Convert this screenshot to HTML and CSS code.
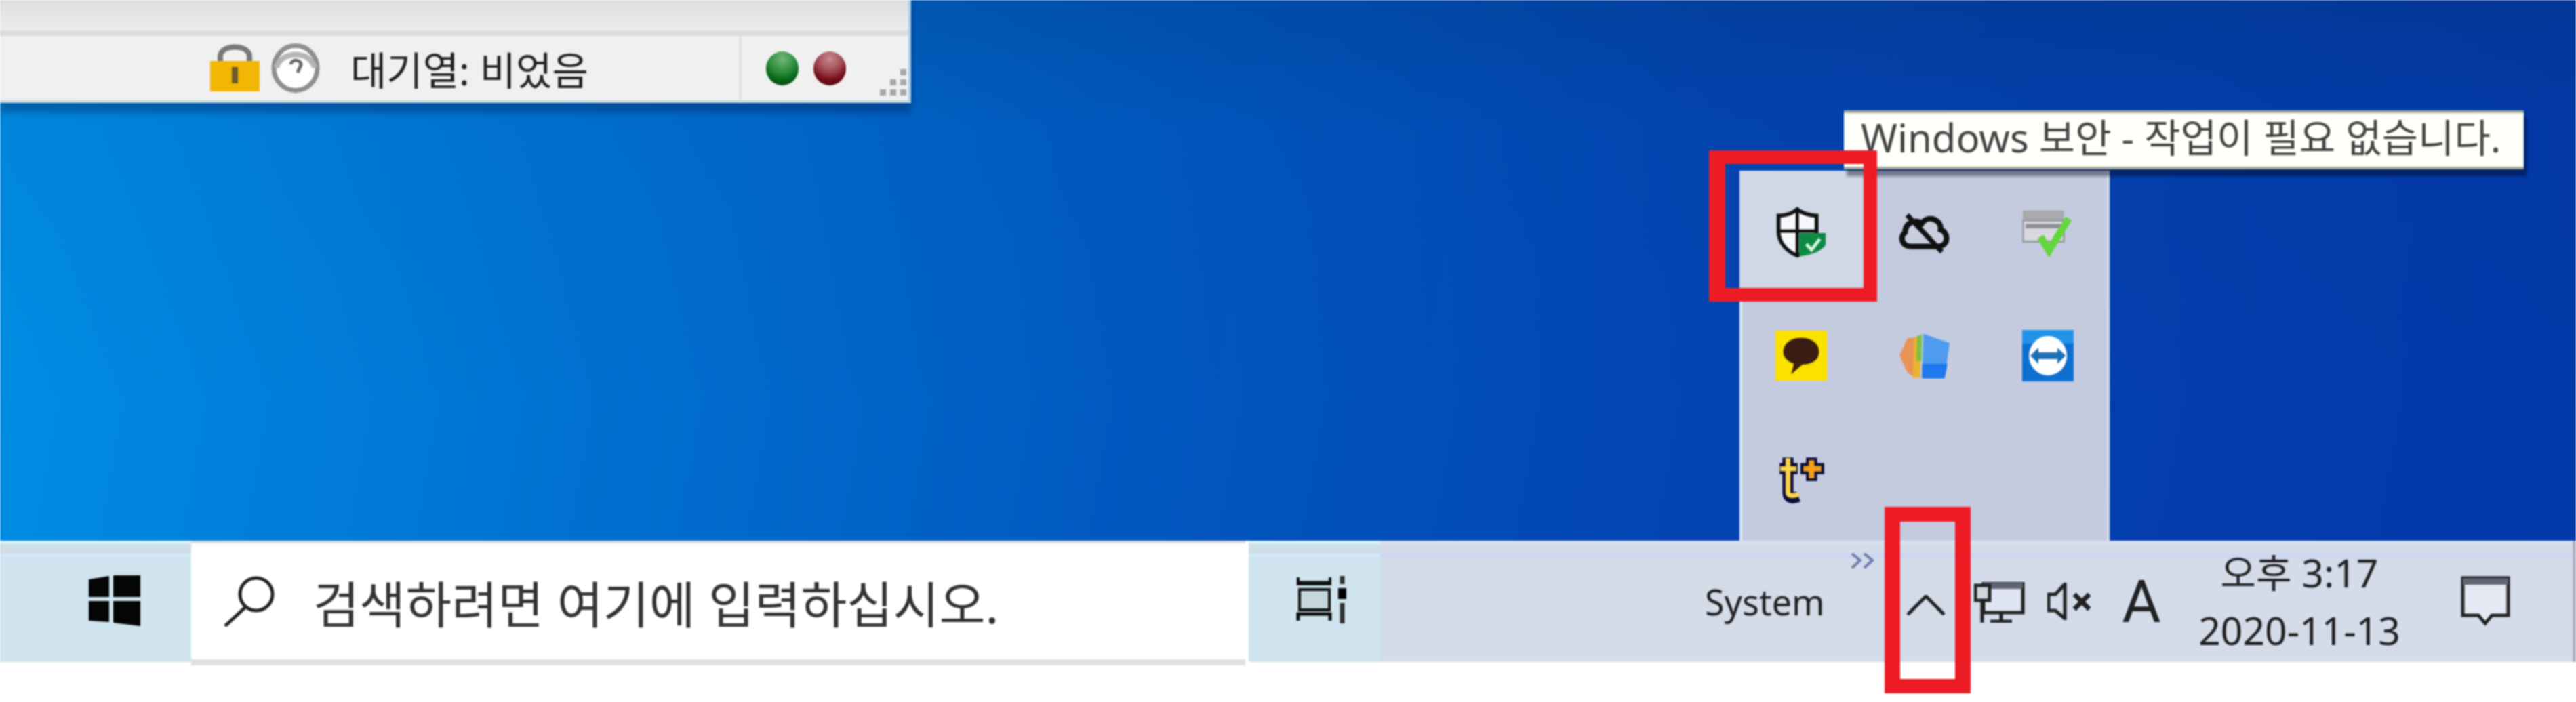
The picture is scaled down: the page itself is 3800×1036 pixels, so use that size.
FILE: index.html
```html
<!DOCTYPE html>
<html lang="ko">
<head>
    <meta charset="utf-8">
    <title>Windows 보안</title>
    <link rel="stylesheet" href="styles.css">
</head>
<body>
    <div class="desktop">
        <div class="window">
            <div class="window-top"></div>
            <div class="status">
                <svg class="lock" viewBox="0 0 73 75">
                    <path d="M15 34V20C15 2 58 2 58 20V34" fill="none" stroke="#77797a" stroke-width="8"/>
                    <rect y="27" width="73" height="45" fill="#f2b705"/>
                    <rect x="32" y="36" width="9" height="24" fill="#6b5a2a"/>
                </svg>
                <svg class="gauge" viewBox="0 0 72 75">
                    <ellipse cx="36" cy="37.500" rx="32" ry="33" fill="#fff" stroke="#8e8e8e" stroke-width="7"/>
                    <path d="M8 37C12 14 56 8 64 37" fill="none" stroke="#b5b5b5" stroke-width="8"/>
                    <path d="M29 32C30 24 44 24 44 33L39 44" fill="none" stroke="#666" stroke-width="5"/>
                </svg>
                <span class="queue">대기열: 비었음</span>
                <div class="status-sep"></div>
                <div class="ball green"></div>
                <div class="ball red"></div>
                <svg class="grip" viewBox="0 0 45 45">
                    <g fill="#a8a8a8">
                        <rect x="33" y="3" width="9" height="9"/>
                        <rect x="18" y="18" width="9" height="9"/>
                        <rect x="33" y="18" width="9" height="9"/>
                        <rect x="3" y="33" width="9" height="9"/>
                        <rect x="18" y="33" width="9" height="9"/>
                        <rect x="33" y="33" width="9" height="9"/>
                    </g>
                </svg>
            </div>
        </div>

        <div class="tray-popup">
            <div class="tray-cell hover">
                <svg class="icon" viewBox="0 0 80 78">
                    <path d="M34 3C26 10 14 13 5 13V38C5 56 20 70 34 75C48 70 64 56 64 38V13C55 13 42 10 34 3Z" fill="#f7f8fb" stroke="#111" stroke-width="6"/>
                    <path d="M34 3V75M5 37H64" stroke="#111" stroke-width="5"/>
                    <path d="M37 40H78V58C72 68 58 74 37 76Z" fill="#0f8a45"/>
                    <path d="M48 57L56 66L69 49" fill="none" stroke="#d6f5df" stroke-width="5"/>
                </svg>
            </div>
            <div class="tray-cell">
                <svg class="icon" viewBox="0 0 74 60">
                    <path d="M18 50C4 50 1 36 9 30C9 16 24 10 33 17C42 4 62 12 60 26C72 30 72 50 56 50Z" fill="#c9cedf" stroke="#111" stroke-width="8"/>
                    <path d="M12 5L62 58" stroke="#111" stroke-width="7"/>
                </svg>
            </div>
            <div class="tray-cell">
                <svg class="icon" viewBox="0 0 73 64">
                    <rect x="1" y="1" width="58" height="14" fill="#a8a9ad"/>
                    <rect x="1" y="15" width="58" height="30" fill="#d9dadf" stroke="#9b9ca2" stroke-width="3"/>
                    <rect x="5" y="20" width="50" height="6" fill="#8b8c92"/>
                    <path d="M26 38L38 58L66 12" fill="none" stroke="#62d63c" stroke-width="10"/>
                </svg>
            </div>
            <div class="tray-cell">
                <svg class="icon" viewBox="0 0 78 76">
                    <rect width="78" height="76" fill="#fae100"/>
                    <path d="M39 11C56 11 66 20 66 32C66 44 56 51 41 51L24 66L28 50C17 46 12 40 12 32C12 20 22 11 39 11Z" fill="#3a1d12"/>
                </svg>
            </div>
            <div class="tray-cell">
                <svg class="icon" viewBox="0 0 73 65">
                    <path d="M12 8L26 6L22 63L12 56L1 32Z" fill="#f08a3e" opacity=".85"/>
                    <path d="M22 7L32 3L30 64H20Z" fill="#e8b42e"/>
                    <path d="M26 5L33 2L32 40H25Z" fill="#7cc043"/>
                    <path d="M35 1L50 7L72 14L65 64H33Z" fill="#4e9bf0"/>
                    <path d="M33 44H69L65 65H33Z" fill="#1f78ec"/>
                </svg>
            </div>
            <div class="tray-cell">
                <svg class="icon" viewBox="0 0 76 76">
                    <rect width="76" height="76" fill="#0e6fd0"/>
                    <rect width="76" height="20" fill="#2293e8"/>
                    <ellipse cx="38" cy="38" rx="28" ry="29" fill="#fff"/>
                    <rect x="22" y="33" width="32" height="10" fill="#1c6fb4"/>
                    <path d="M12 38L24 26V50ZM64 38L52 26V50Z" fill="#1c6fb4"/>
                </svg>
            </div>
            <div class="tray-cell">
                <svg class="icon" viewBox="0 0 74 70">
                    <path d="M18 4V54C18 62 24 64 33 60M6 20H32" fill="none" stroke="#0c0c3a" stroke-width="16"/>
                    <path d="M18 5V54C18 59 24 60 33 57M7 20H30" fill="none" stroke="#fbd647" stroke-width="7"/>
                    <path d="M52 4V38M36 20H70" fill="none" stroke="#0c0c3a" stroke-width="16"/>
                    <path d="M52 8V34M40 20H66" fill="none" stroke="#f59e1a" stroke-width="8"/>
                </svg>
            </div>
        </div>

        <div class="tooltip">Windows 보안 - 작업이 필요 없습니다.</div>
    </div>

    <div class="taskbar">
        <div class="start">
            <svg class="win-logo" viewBox="0 0 76 75">
                <path d="M0 6L30 1V32H0ZM36 0L76 0V32H36ZM0 38H30V69L0 67ZM36 38H76V75L36 70Z" fill="#050505"/>
            </svg>
        </div>
        <div class="search">
            <svg class="search-icon" viewBox="0 0 75 75">
                <ellipse cx="48" cy="27" rx="24" ry="24" fill="none" stroke="#222" stroke-width="5"/>
                <path d="M32 46L2 74" stroke="#222" stroke-width="5"/>
            </svg>
            <span class="search-text">검색하려면 여기에 입력하십시오.</span>
        </div>
        <div class="task-view">
            <svg class="task-icon" viewBox="0 0 75 70">
                <path d="M3 10H50M3 66V56H50V66" fill="none" stroke="#111" stroke-width="5"/>
                <path d="M3 2V12H50V2" fill="none" stroke="#111" stroke-width="4"/>
                <rect x="5" y="20" width="44" height="30" fill="#c6d6dd" stroke="#111" stroke-width="4"/>
                <path d="M68 0V12M68 40V70" stroke="#333" stroke-width="7"/>
                <rect x="62" y="18" width="12" height="16" fill="#000"/>
            </svg>
        </div>
        <div class="tray">
            <span class="tray-label">System</span>
            <svg class="tray-more" viewBox="0 0 37 25">
                <path d="M2 2L14 12L2 23M20 2L32 12L20 23" fill="none" stroke="#6f7da6" stroke-width="4"/>
            </svg>
            <svg class="chevron" viewBox="0 0 58 30">
                <path d="M2 29L29 2L56 29" fill="none" stroke="#222" stroke-width="5"/>
            </svg>
            <svg class="network" viewBox="0 0 75 60">
                <rect x="14" y="1" width="58" height="44" fill="#dfe4f2" stroke="#222" stroke-width="5"/>
                <rect x="14" y="1" width="58" height="9" fill="#5f6372"/>
                <rect x="2" y="5" width="21" height="22" fill="#d0d4de" stroke="#222" stroke-width="5"/>
                <path d="M12 26V60M40 45V58M24 58H56" stroke="#222" stroke-width="5" fill="none"/>
            </svg>
            <svg class="speaker" viewBox="0 0 66 55">
                <path d="M26 2V53L12 41H2V17H12Z" fill="none" stroke="#222" stroke-width="5"/>
                <path d="M40 17L62 39M62 17L40 39" stroke="#222" stroke-width="7"/>
            </svg>
            <span class="ime">A</span>
            <div class="clock">
                <span>오후 3:17</span>
                <span>2020-11-13</span>
            </div>
            <svg class="notify" viewBox="0 0 73 75">
                <path d="M3 3H70V58H46L36 70L26 58H3Z" fill="#e6e9f4" stroke="#222" stroke-width="5"/>
                <rect x="3" y="3" width="67" height="10" fill="#5f6372"/>
            </svg>
        </div>
    </div>

    <div class="mark mark-shield"></div>
    <div class="mark mark-arrow"></div>
</body>
</html>
```

FILE: styles.css
```css
html, body {
    margin: 0;
    height: 100%;
    background: #fff;
    overflow: hidden;
}

body {
    position: relative;
    font-family: "Noto Sans", "Noto Sans CJK KR", sans-serif;
    color: #222;
    filter: blur(1.2px);
}

.desktop {
    position: relative;
    height: 798px;
    background:
        linear-gradient(180deg, rgba(0, 40, 90, .16) 0, rgba(0, 40, 90, 0) 190px),
        linear-gradient(180deg, rgba(0, 50, 130, .12) 0, rgba(0, 50, 130, 0) 600px),
        linear-gradient(100deg, #0090e6 0%, #0079d6 18%, #005cc2 42%, #0345b2 65%, #0338a8 100%);
}

/* app window in the top corner */
.window {
    position: absolute;
    left: 0;
    top: 0;
    width: 1340px;
    height: 148px;
    border-right: 4px solid #a9cbe4;
    border-bottom: 4px solid #c2d9ea;
    box-shadow: 0 14px 8px rgba(0, 20, 60, .3);
    display: flex;
    flex-direction: column;
}

.window-top {
    height: 45px;
    background: linear-gradient(#dedede, #ececec);
    border-bottom: 8px solid #dcdcdc;
}

.status {
    flex: 1;
    background: #f0f0f0;
    display: flex;
    align-items: center;
    padding-left: 310px;
}

.lock {
    width: 73px;
    height: 75px;
}

.gauge {
    width: 72px;
    height: 75px;
    margin-left: 17px;
}

.queue {
    font-size: 58px;
    margin-left: 45px;
    width: 573px;
    flex: none;
    white-space: nowrap;
}

.status-sep {
    width: 4px;
    align-self: stretch;
    background: #e2e2e2;
}

.ball {
    width: 48px;
    height: 50px;
    border-radius: 50%;
    flex: none;
}

.green {
    margin-left: 36px;
    background: radial-gradient(circle at 50% 22%, #74b878, #2a8a3a 45%, #0a6a1c 65%, #033f0e 95%);
}

.red {
    margin-left: 22px;
    background: radial-gradient(circle at 50% 22%, #c98a90, #a24a54 40%, #78101a 65%, #4c0208 95%);
}

.grip {
    width: 45px;
    height: 45px;
    flex: none;
    margin-left: 47px;
    align-self: flex-end;
    margin-bottom: 4px;
}

/* hidden icons flyout */
.tray-popup {
    position: absolute;
    left: 2566px;
    top: 252px;
    width: 546px;
    height: 546px;
    background: #c5cbdf;
    box-shadow: inset 4px 0 0 #dbe6f6, inset -4px 0 0 #d5dcee;
    display: grid;
    grid-template-columns: repeat(3, 182px);
    grid-template-rows: repeat(3, 182px);
}

.tray-cell {
    display: flex;
    align-items: center;
    justify-content: center;
}

.tray-cell.hover {
    background: #d0d8e6;
}

.tray-cell .icon {
    width: 76px;
    height: 76px;
}

.tooltip {
    position: absolute;
    left: 2720px;
    top: 163px;
    width: 1003px;
    height: 87px;
    box-sizing: border-box;
    padding-left: 25px;
    background: #fffffb;
    border-top: 4px solid #a9ab9c;
    border-bottom: 4px solid #a9ab9c;
    box-shadow: 4px 10px 4px rgba(0, 0, 20, .42);
    font-size: 58px;
    line-height: 72px;
    color: #444;
    white-space: nowrap;
}

/* taskbar */
.taskbar {
    height: 179px;
    display: flex;
}

.start, .task-view {
    background: linear-gradient(#d6f1fb 0 5px, #cfdfe5 5px 19px, #cfe8fa 19px 24px, #cfe4ee 24px);
    display: flex;
    align-items: center;
}

.start {
    width: 282px;
    padding-left: 131px;
    box-sizing: border-box;
}

.win-logo {
    width: 76px;
    height: 75px;
    margin-top: -2px;
}

.search {
    width: 1555px;
    height: 171px;
    margin-top: 4px;
    background: #fff;
    box-shadow: 0 9px 0 #e0e0e0, 0 -4px 0 #dcdcd8;
    display: flex;
    align-items: center;
    padding-left: 48px;
    box-sizing: border-box;
}

.search-icon {
    width: 75px;
    height: 75px;
}

.search-text {
    font-size: 74px;
    margin-left: 57px;
    color: #333;
    white-space: nowrap;
}

.task-view {
    width: 194px;
    margin-left: 5px;
    padding-left: 70px;
    box-sizing: border-box;
}

.task-icon {
    width: 75px;
    height: 70px;
    margin-top: -6px;
}

.tray {
    flex: 1;
    background: linear-gradient(#d8dfee 0 5px, #d4dbea 5px 19px, #cdd6f4 19px 25px, #d4dbe9 25px);
    border-right: 5px solid #aeb4c4;
    display: flex;
    align-items: center;
    padding-left: 479px;
}

.tray-label {
    width: 172px;
    font-size: 52px;
    white-space: nowrap;
}

.tray-more {
    width: 37px;
    height: 25px;
    margin-left: 43px;
    align-self: flex-start;
    margin-top: 17px;
}

.chevron {
    width: 58px;
    height: 30px;
    margin-left: 45px;
    margin-top: 10px;
}

.network {
    width: 75px;
    height: 60px;
    margin-left: 42px;
    margin-top: 2px;
}

.speaker {
    width: 66px;
    height: 55px;
    margin-left: 33px;
}

.ime {
    width: 58px;
    margin-left: 44px;
    font-family: Roboto, sans-serif;
    font-size: 88px;
    line-height: 1;
    text-align: center;
}

.clock {
    width: 300px;
    margin-left: 54px;
    display: flex;
    flex-direction: column;
    align-items: center;
    gap: 10px;
    font-size: 57px;
    line-height: 75px;
    white-space: nowrap;
}

.notify {
    width: 73px;
    height: 75px;
    margin-left: 88px;
}

/* red marks drawn over the screenshot */
.mark {
    position: absolute;
    box-sizing: border-box;
    border-style: solid;
    border-color: #ed1c24;
}

.mark-shield {
    left: 2521px;
    top: 222px;
    width: 248px;
    height: 223px;
    border-width: 20px 20px 20px 24px;
}

.mark-arrow {
    left: 2780px;
    top: 748px;
    width: 127px;
    height: 275px;
    border-width: 22px 23px 21px 23px;
}
```
